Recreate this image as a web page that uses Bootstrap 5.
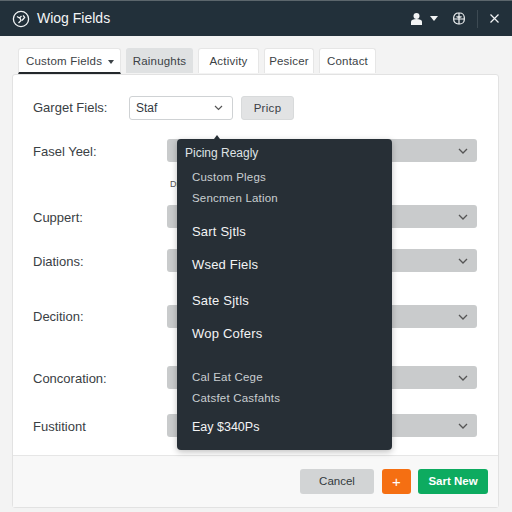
<!DOCTYPE html>
<html lang="en">
<head>
    <meta charset="UTF-8">
    <meta name="viewport" content="width=device-width, initial-scale=1.0">
    <title>Wiog Fields</title>
    <link href="https://cdn.jsdelivr.net/npm/bootstrap@5.3.3/dist/css/bootstrap.min.css" rel="stylesheet">
    <style>
        html, body { height: 512px; overflow: hidden; }
        body {
            background-color: #f3f3f3;
            font-family: 'Liberation Sans', Arial, sans-serif;
            color: #333a3f;
        }
        .top-bar {
            height: 36px;
            background-color: #22303a;
            color: #f2f4f5;
            padding: 0 13px 0 12px;
            border-top: 1px solid #5c666c;
        }
        .top-title { font-size: 14px; margin-left: 7px; }
        .top-caret { margin-left: 8px; }
        .top-globe { margin-left: 15px; }
        .top-sep { width: 1px; height: 18px; background-color: #3d4a53; margin: 0 12px 0 12px; }
        .tab-strip { padding: 12px 0 0 18px; height: 38px; gap: 5px; }
        .tab-item {
            height: 25px;
            font-size: 11.5px;
            line-height: 25px;
            text-align: center;
            white-space: nowrap;
            letter-spacing: .2px;
            background-color: #fff;
            border: 1px solid #e6e6e6;
            border-bottom: 0;
            border-radius: 3px 3px 0 0;
            color: #3c4246;
        }
        .tab-active { border-bottom: 2px solid #23282c; width: 103px; height: 26px; text-align: left; padding-left: 7px; }
        .tab-grey { background-color: #dfe1e2; border-color: #dfe1e2; width: 67px; }
        .tab-third { width: 61px; }
        .tab-fourth { width: 50px; }
        .tab-fifth { width: 57px; }
        .tab-caret { margin-left: 6px; vertical-align: 1px; }
        .panel-box {
            margin: 0 13px 0 12px;
            height: 434px;
            background-color: #fff;
            border: 1px solid #e2e2e2;
            border-radius: 3px;
        }
        .panel-main { height: 381px; padding: 21px 21px 0 20px; border-bottom: 1px solid #e6e6e6; }
        .filter-row { height: 24px; margin-bottom: 19px; }
        .row-label { width: 134px; font-size: 13px; color: #3a4044; flex-shrink: 0; padding-top: 3px; }
        .filter-label { width: 96px; padding-top: 0; }
        .label-high { padding-top: 1px; }
        .filter-select {
            width: 104px;
            height: 24px;
            padding: 0 9px 0 6px;
            font-size: 12px;
            border: 1px solid #cfd2d4;
            border-radius: 3px;
        }
        .filter-btn {
            width: 53px;
            height: 24px;
            margin-left: 8px;
            font-size: 11.5px;
            line-height: 22px;
            letter-spacing: .3px;
            padding: 0;
            background-color: #e2e3e4;
            border: 1px solid #d8dadb;
            color: #3a4044;
            border-radius: 3px;
        }
        .grey-select {
            flex: 1;
            height: 23px;
            background-color: #c9cbcc;
            border-radius: 3px;
            padding-right: 9px;
        }
        .field-row { height: 23px; }
        .gap-b { margin-top: 43px; }
        .gap-c { margin-top: 21px; }
        .gap-d { margin-top: 33px; }
        .gap-e { margin-top: 38px; }
        .gap-f { margin-top: 25px; }
        .cut-note { position: absolute; left: 170px; top: 178px; font-size: 9px; color: #555; }
        .pick-menu {
            position: absolute;
            left: 177px;
            top: 139px;
            width: 215px;
            height: 311px;
            background-color: #272f36;
            border-radius: 4px;
            box-shadow: 0 2px 6px rgba(0,0,0,.25);
            color: #e9ecee;
            padding: 7px 0 0 15px;
        }
        .pick-menu::before {
            content: "";
            position: absolute;
            left: 37px;
            top: -4px;
            border-left: 3px solid transparent;
            border-right: 3px solid transparent;
            border-bottom: 4px solid #272f36;
        }
        .menu-head { font-size: 12px; line-height: 15px; margin-left: -7px; color: #dfe3e5; }
        .menu-sub { font-size: 11.5px; line-height: 14px; letter-spacing: .2px; color: #c9ced1; }
        .menu-big { font-size: 13px; line-height: 16px; letter-spacing: .2px; color: #f3f4f5; }
        .menu-price { font-size: 12.5px; letter-spacing: 0; }
        .m1 { margin-top: 9px; }
        .m2 { margin-top: 7px; }
        .m3 { margin-top: 19px; }
        .m4 { margin-top: 17px; }
        .m5 { margin-top: 20px; }
        .m6 { margin-top: 28px; }
        .m7 { margin-top: 7px; }
        .m8 { margin-top: 14px; }
        .panel-foot { height: 51px; background-color: #f8f8f8; padding: 13px 10px 0 0; gap: 8px; }
        .foot-btn { height: 25px; padding: 0; font-size: 11.5px; line-height: 25px; border: 0; border-radius: 3px; }
        .foot-cancel { width: 74px; background-color: #d2d4d5; color: #33393d; }
        .foot-plus { width: 29px; background-color: #f56f12; color: #fff; font-size: 15px; }
        .foot-save { width: 70px; background-color: #0dab60; color: #fff; font-weight: 700; margin-left: -1px; }
    </style>
</head>
<body>
<!-- Top bar -->
<div class="top-bar d-flex align-items-center">
    <svg width="18" height="18" viewBox="0 0 18 18" fill="none" stroke="#f2f4f5" stroke-width="1.3">
        <circle cx="9" cy="9" r="7.6"/>
        <path d="M5 6.500l2.500 1.500L9.500 6M8 8l1 2.500L6.500 13M10 10.500l3-3.500M11 5.500l1.500 1.500"/>
    </svg>
    <span class="top-title">Wiog Fields</span>
    <div class="ms-auto d-flex align-items-center">
        <svg width="11" height="14" viewBox="0 0 11 14" fill="#f2f4f5">
            <circle cx="5.500" cy="4" r="3"/>
            <path d="M0 13V9.500C0 8 2.500 7 5.500 7s5.500 1 5.500 2.500V13z"/>
        </svg>
        <svg class="top-caret" width="8" height="5" viewBox="0 0 8 5" fill="#f2f4f5"><path d="M0 0h8L4 5z"/></svg>
        <svg class="top-globe" width="12" height="13" viewBox="0 0 12 13" fill="none" stroke="#f2f4f5" stroke-width="1.2">
            <rect x=".7" y="1" width="10.600" height="11" rx="4.500"/>
            <path d="M6 1v11M3.500 4.500c1 .8 1.700.8 2.500 0M8.500 4.500c-1 .8-1.700.8-2.500 0M1 7h10"/>
        </svg>
        <span class="top-sep"></span>
        <svg width="9" height="9" viewBox="0 0 9 9" stroke="#f2f4f5" stroke-width="1.2"><path d="M.5.5l8 8M8.500.5l-8 8"/></svg>
    </div>
</div>

<!-- Tabs -->
<div class="tab-strip d-flex align-items-start">
    <div class="tab-item tab-active">Custom Fields<svg class="tab-caret" width="6" height="4" viewBox="0 0 6 4" fill="#3c4246"><path d="M0 0h6L3 4z"/></svg></div>
    <div class="tab-item tab-grey">Rainughts</div>
    <div class="tab-item tab-third">Activity</div>
    <div class="tab-item tab-fourth">Pesicer</div>
    <div class="tab-item tab-fifth">Contact</div>
</div>

<!-- Main panel -->
<div class="panel-box">
    <div class="panel-main">
        <div class="filter-row d-flex align-items-center">
            <div class="row-label filter-label">Garget Fiels:</div>
            <div class="filter-select d-flex align-items-center justify-content-between">
                <span>Staf</span>
                <svg width="9" height="6" viewBox="0 0 9 6" fill="none" stroke="#555" stroke-width="1.2"><path d="M1 1l3.500 3.500L8 1"/></svg>
            </div>
            <button type="button" class="btn filter-btn">Pricp</button>
        </div>

        <div class="field-row d-flex align-items-center">
            <div class="row-label">Fasel Yeel:</div>
            <div class="grey-select d-flex align-items-center justify-content-end">
                <svg width="10" height="6" viewBox="0 0 10 6" fill="none" stroke="#555" stroke-width="1.3"><path d="M1 1l4 4 4-4"/></svg>
            </div>
        </div>
        <div class="field-row gap-b d-flex align-items-center">
            <div class="row-label">Cuppert:</div>
            <div class="grey-select d-flex align-items-center justify-content-end">
                <svg width="10" height="6" viewBox="0 0 10 6" fill="none" stroke="#555" stroke-width="1.3"><path d="M1 1l4 4 4-4"/></svg>
            </div>
        </div>
        <div class="field-row gap-c d-flex align-items-center">
            <div class="row-label">Diations:</div>
            <div class="grey-select d-flex align-items-center justify-content-end">
                <svg width="10" height="6" viewBox="0 0 10 6" fill="none" stroke="#555" stroke-width="1.3"><path d="M1 1l4 4 4-4"/></svg>
            </div>
        </div>
        <div class="field-row gap-d d-flex align-items-center">
            <div class="row-label label-high">Decition:</div>
            <div class="grey-select d-flex align-items-center justify-content-end">
                <svg width="10" height="6" viewBox="0 0 10 6" fill="none" stroke="#555" stroke-width="1.3"><path d="M1 1l4 4 4-4"/></svg>
            </div>
        </div>
        <div class="field-row gap-e d-flex align-items-center">
            <div class="row-label">Concoration:</div>
            <div class="grey-select d-flex align-items-center justify-content-end">
                <svg width="10" height="6" viewBox="0 0 10 6" fill="none" stroke="#555" stroke-width="1.3"><path d="M1 1l4 4 4-4"/></svg>
            </div>
        </div>
        <div class="field-row gap-f d-flex align-items-center">
            <div class="row-label">Fustitiont</div>
            <div class="grey-select d-flex align-items-center justify-content-end">
                <svg width="10" height="6" viewBox="0 0 10 6" fill="none" stroke="#555" stroke-width="1.3"><path d="M1 1l4 4 4-4"/></svg>
            </div>
        </div>
    </div>
    <div class="panel-foot d-flex justify-content-end align-items-start">
        <button type="button" class="btn foot-btn foot-cancel">Cancel</button>
        <button type="button" class="btn foot-btn foot-plus">+</button>
        <button type="button" class="btn foot-btn foot-save">Sart New</button>
    </div>
</div>

<div class="cut-note">Di</div>

<!-- Open menu -->
<div class="pick-menu">
    <div class="menu-head">Picing Reagly</div>
    <div class="menu-sub m1">Custom Plegs</div>
    <div class="menu-sub m2">Sencmen Lation</div>
    <div class="menu-big m3">Sart Sjtls</div>
    <div class="menu-big m4">Wsed Fiels</div>
    <div class="menu-big m5">Sate Sjtls</div>
    <div class="menu-big m4">Wop Cofers</div>
    <div class="menu-sub m6">Cal Eat Cege</div>
    <div class="menu-sub m7">Catsfet Casfahts</div>
    <div class="menu-big menu-price m8">Eay $340Ps</div>
</div>

<script src="https://cdn.jsdelivr.net/npm/bootstrap@5.3.3/dist/js/bootstrap.bundle.min.js"></script>
</body>
</html>
